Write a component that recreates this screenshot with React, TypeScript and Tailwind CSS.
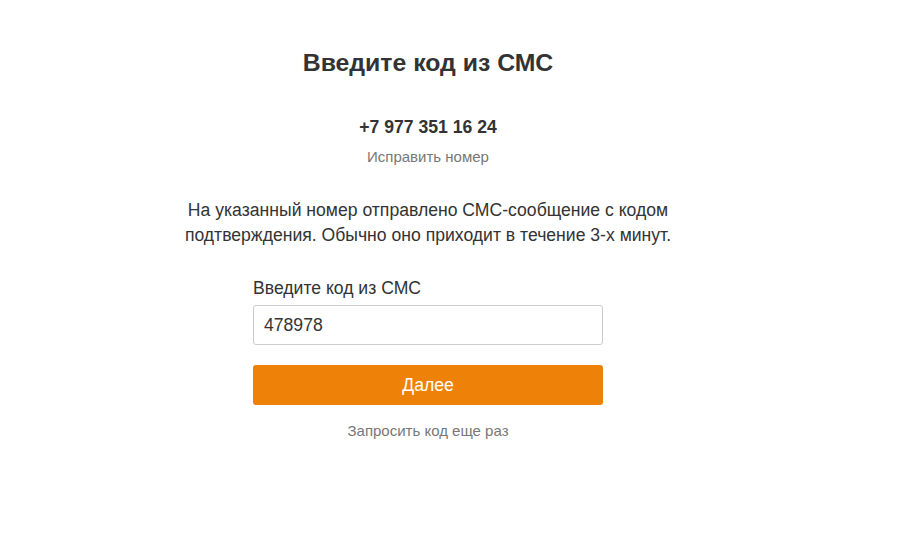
export default function App() {
  return (
    <div className="min-h-[559px] w-full bg-white font-['Liberation_Sans',Arial,sans-serif] text-[#333]">
      <div className="w-[856px] flex flex-col items-center pt-[47px]">
        <h1 className="text-[24.8px] font-bold leading-[32px]">Введите код из СМС</h1>
        <div className="mt-[37px] text-[17.6px] font-bold leading-[22px]">+7 977 351 16 24</div>
        <a href="#" className="mt-[9px] text-[15px] leading-[20px] text-[#777]">Исправить номер</a>
        <p className="mt-[31px] w-[500px] text-center text-[17.6px] leading-[25px]">
          На указанный номер отправлено СМС-сообщение с кодом подтверждения. Обычно оно приходит в течение 3-х минут.
        </p>
        <div className="mt-[29px] w-[350px] flex flex-col">
          <label className="text-[17.6px] leading-[22px] mb-[6px]">Введите код из СМС</label>
          <input
            defaultValue="478978"
            className="h-[40px] w-full rounded-[3px] border border-[#ccc] px-[10px] text-[17.6px] text-[#333] outline-none"
          />
          <button className="mt-[20px] h-[40px] w-full rounded-[3px] bg-[#ee8208] text-[17.6px] text-white">
            Далее
          </button>
          <a href="#" className="mt-[16px] text-center text-[15px] leading-[20px] text-[#777]">
            Запросить код еще раз
          </a>
        </div>
      </div>
    </div>
  )
}
